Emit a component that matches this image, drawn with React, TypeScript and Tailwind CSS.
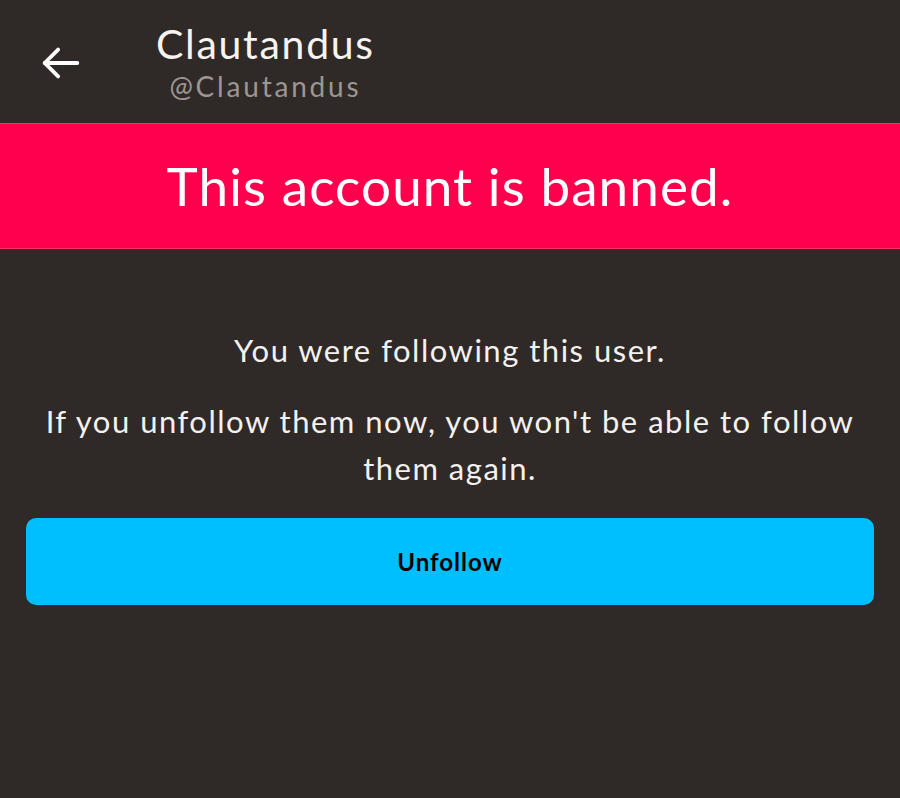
export default function App() {
  return (
    <div
      className="min-h-[798px] w-[900px] bg-[#2f2a28] text-white"
      style={{ fontFamily: "Lato, 'Noto Sans', sans-serif" }}
    >
      <div className="flex h-[123px] items-start pt-[18px]">
        <button className="ml-[38px] mt-[22px] flex h-[46px] w-[46px] items-center justify-center text-white">
          <svg width="46" height="46" viewBox="0 0 24 24" fill="none" stroke="currentColor" strokeWidth="2" strokeLinecap="round" strokeLinejoin="round">
            <path d="M20.5 12H3.5" />
            <path d="M10.5 5l-7 7 7 7" />
          </svg>
        </button>
        <div className="ml-[72px] flex flex-col items-center">
          <div className="text-[41px] leading-[52px] tracking-[1.7px] text-[#f6f3f1]">Clautandus</div>
          <div className="text-[28px] leading-[32px] tracking-[2.8px] text-[#9d9693]">@Clautandus</div>
        </div>
      </div>
      <div className="flex h-[126px] items-center justify-center border-y border-[#ff3366] bg-[#ff004c]">
        <h1 className="text-[53px] font-normal tracking-[1.1px] text-white">This account is banned.</h1>
      </div>
      <div className="px-[40px] pt-[78px] text-center text-[31px] leading-[47px] tracking-[1.5px] text-[#f4f1ef]">
        <p>You were following this user.</p>
        <p className="mt-[24px]">
          If you unfollow them now, you won't be able to follow them again.
        </p>
      </div>
      <div className="px-[26px] pt-[26px]">
        <button className="flex h-[87px] w-full items-center justify-center rounded-[10px] bg-[#00bfff] text-[24px] font-bold tracking-[1px] text-black">
          Unfollow
        </button>
      </div>
    </div>
  );
}
